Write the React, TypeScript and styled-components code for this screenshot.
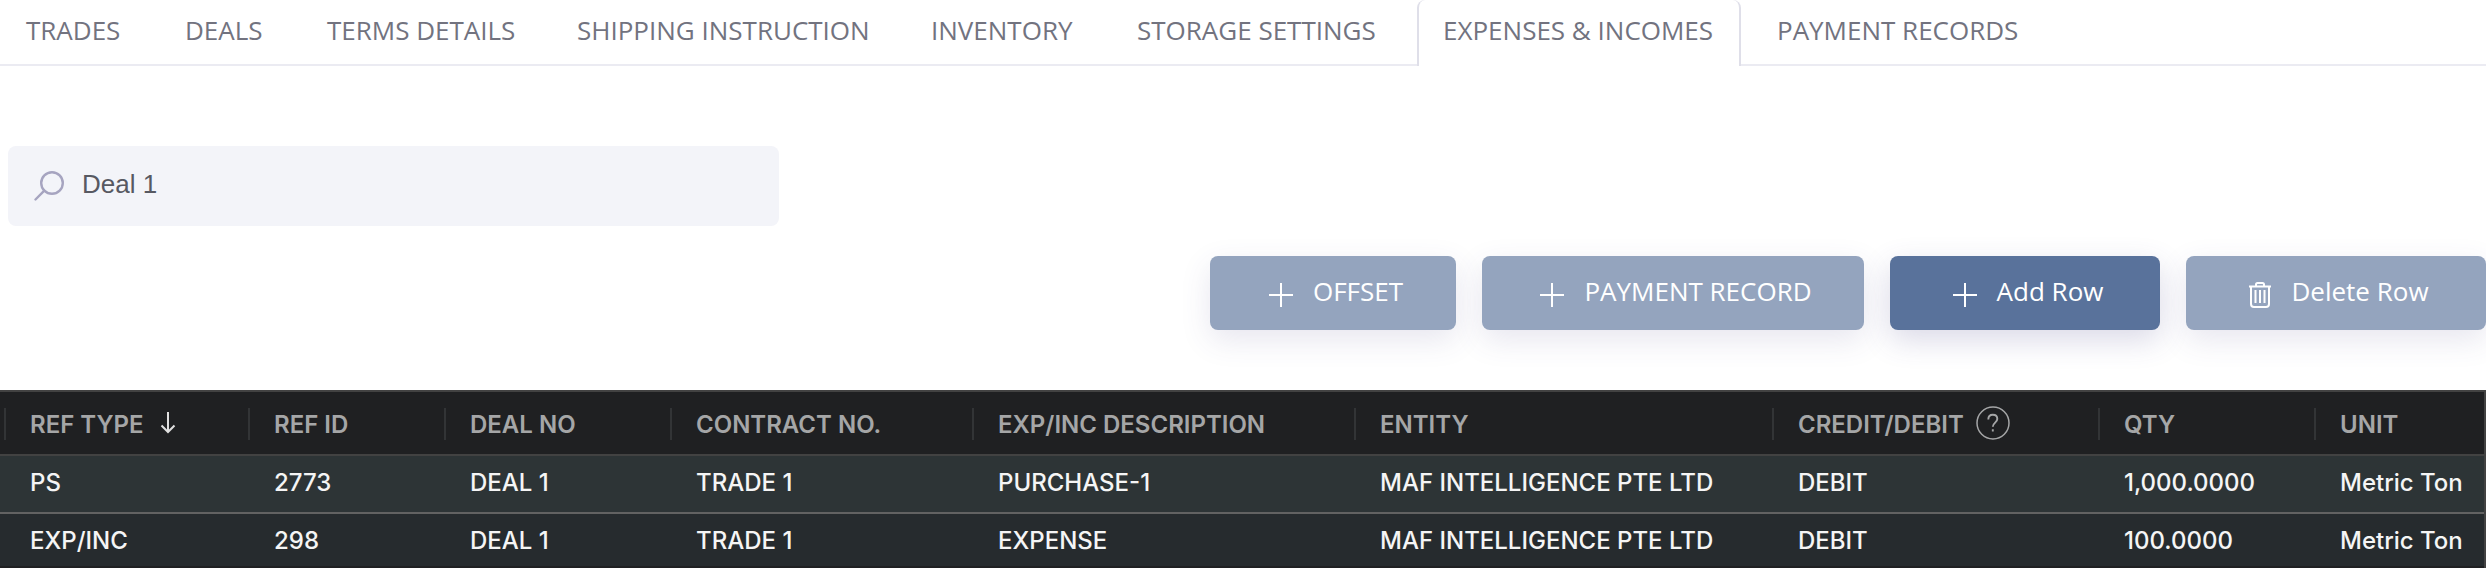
import React, { useState } from 'react';
import styled, { createGlobalStyle } from 'styled-components';

const GlobalStyle = createGlobalStyle`
  *, *::before, *::after { box-sizing: border-box; }
  body { margin: 0; background: #fff; overflow-x: hidden; }
`;

const Page = styled.main`
  font-family: 'Open Sans', sans-serif;
  font-size: 26px;
  line-height: 36px;
`;

const TabBar = styled.nav`
  display: flex;
  height: 66px;
  border-bottom: 2px solid #ebebf2;
`;

const Tab = styled.a<{ $active?: boolean; $width: number }>`
  flex: 0 0 ${(p) => p.$width}px;
  height: 66px;
  margin-right: 10px;
  padding: 12px 0 0 24px;
  border: 2px solid ${(p) => (p.$active ? '#dfdfe9' : 'transparent')};
  border-width: 0 2px;
  border-radius: 8px 8px 0 0;
  background: ${(p) => (p.$active ? '#fff' : 'transparent')};
  color: #72737f;
  text-decoration: none;
  white-space: nowrap;
`;

const SearchBox = styled.label`
  display: flex;
  align-items: center;
  gap: 18px;
  width: 31%;
  height: 80px;
  margin: 80px 0 0 8px;
  padding: 0 26px;
  border-radius: 8px;
  background: #f3f4f9;
`;

const SearchInput = styled.input`
  flex: 1;
  min-width: 0;
  padding: 0 0 4px;
  border: 0;
  outline: 0;
  background: transparent;
  color: #575962;
  font: 26px/36px 'Liberation Sans', sans-serif;
`;

const Actions = styled.div`
  display: flex;
  justify-content: flex-end;
  gap: 26px;
  margin-top: 30px;
`;

const Button = styled.button<{ $primary?: boolean; $width: number }>`
  display: flex;
  align-items: center;
  justify-content: center;
  gap: 20px;
  width: ${(p) => p.$width}px;
  height: 74px;
  padding: 0 0 4px 6px;
  border: 0;
  border-radius: 8px;
  background: ${(p) => (p.$primary ? '#59729b' : '#94a4be')};
  box-shadow: 0 10px 30px ${(p) => (p.$primary ? 'rgba(69, 65, 135, 0.2)' : 'rgba(69, 65, 135, 0.13)')};
  color: #fff;
  font: inherit;
  white-space: nowrap;

  svg { margin-top: 8px; }
`;

const Table = styled.table`
  width: 100%;
  margin-top: 60px;
  border: solid #424242;
  border-width: 2px 2px 0 0;
  border-spacing: 0;
  table-layout: fixed;
  background: #262b2e;
  color: #f5f5f5;
  font: 500 24px/32px Inter, sans-serif;
`;

const Col = styled.col<{ $width?: number }>`
  width: ${(p) => (p.$width ? `${p.$width}px` : 'auto')};
`;

const HeadCell = styled.th<{ $edge?: boolean }>`
  height: 64px;
  padding: ${(p) => (p.$edge ? '0' : '4px 0 0 24px')};
  border-bottom: 2px solid #424242;
  background: linear-gradient(#323436, #323436) no-repeat right 16px / 2px 32px #1f2022;
  color: #a5a6a7;
  font-weight: 600;
  text-align: left;
  white-space: nowrap;

  &:last-child { background-size: 0 0; }
`;

const HeadContent = styled.span`
  display: flex;
  align-items: center;
  gap: 12px;
  height: 32px;

  svg { margin-bottom: 4px; }
`;

const Row = styled.tr`
  background: #262b2e;

  &:nth-child(odd) { background: #2d3436; }
`;

const Cell = styled.td`
  height: 58px;
  padding: 0 0 2px 24px;
  border-bottom: 2px solid #626262;
  white-space: nowrap;

  ${Row}:last-child & {
    height: 54px;
    padding-top: 2px;
    padding-bottom: 0;
    border-bottom-color: #1f2022;
  }
`;

const EdgeCell = styled(Cell)`
  padding: 0;
`;

const PlusIcon = () => (
  <svg width="24" height="24" viewBox="0 0 24 24" stroke="#fff" strokeWidth="2" aria-hidden="true">
    <path d="M12 0v24M0 12h24" />
  </svg>
);

const TrashIcon = () => (
  <svg width="22" height="26" viewBox="0 0 22 26" fill="none" stroke="#fff" strokeWidth="2" aria-hidden="true">
    <path d="M0 4.500h22M7 4V2.500Q7 1 8.500 1h5Q15 1 15 2.500V4M2 5v17q0 3 3 3h12q3 0 3-3V5M6.500 8v13M11 8v13M15.500 8v13" />
  </svg>
);

const SearchIcon = () => (
  <svg width="30" height="30" viewBox="0 0 30 30" fill="none" stroke="#a6a4c0" strokeWidth="2.400" strokeLinecap="round" aria-hidden="true">
    <circle cx="18" cy="12" r="10.800" />
    <path d="M10.300 19.700L1.500 28.500" />
  </svg>
);

const ArrowDownIcon = () => (
  <svg width="24" height="24" viewBox="0 0 24 24" fill="none" stroke="#e0e0e0" strokeWidth="2" aria-hidden="true">
    <path d="M12 1v20M5.500 14.500L12 21l6.500-6.500" />
  </svg>
);

const HelpIcon = () => (
  <svg width="34" height="34" viewBox="0 0 34 34" fill="none" stroke="#a5a6a7" strokeWidth="1.500" aria-hidden="true">
    <circle cx="17" cy="17" r="16" />
    <path d="M12.300 13.500c0-3 1.700-4.700 4.500-4.700s4.500 1.700 4.500 4.200c0 3.500-4.500 3.800-4.500 7.800M16.800 23.200v2.400" strokeWidth="1.900" />
  </svg>
);

const tabs = [
  { label: 'TRADES', width: 149 },
  { label: 'DEALS', width: 132 },
  { label: 'TERMS DETAILS', width: 240 },
  { label: 'SHIPPING INSTRUCTION', width: 344 },
  { label: 'INVENTORY', width: 196 },
  { label: 'STORAGE SETTINGS', width: 296 },
  { label: 'EXPENSES & INCOMES', width: 324 },
  { label: 'PAYMENT RECORDS', width: 296 },
];

const columns = [
  { label: 'REF TYPE', width: 244, icon: <ArrowDownIcon /> },
  { label: 'REF ID', width: 196 },
  { label: 'DEAL NO', width: 226 },
  { label: 'CONTRACT NO.', width: 302 },
  { label: 'EXP/INC DESCRIPTION', width: 382 },
  { label: 'ENTITY', width: 418 },
  { label: 'CREDIT/DEBIT', width: 326, icon: <HelpIcon /> },
  { label: 'QTY', width: 216 },
  { label: 'UNIT' },
];

const rows = [
  ['PS', '2773', 'DEAL 1', 'TRADE 1', 'PURCHASE-1', 'MAF INTELLIGENCE PTE LTD', 'DEBIT', '1,000.0000', 'Metric Ton'],
  ['EXP/INC', '298', 'DEAL 1', 'TRADE 1', 'EXPENSE', 'MAF INTELLIGENCE PTE LTD', 'DEBIT', '100.0000', 'Metric Ton'],
];

export default function App() {
  const [active, setActive] = useState('EXPENSES & INCOMES');
  const [query, setQuery] = useState('Deal 1');

  return (
    <Page>
      <GlobalStyle />
      <TabBar>
        {tabs.map((tab) => (
          <Tab
            key={tab.label}
            href="#"
            $width={tab.width}
            $active={tab.label === active}
            onClick={() => setActive(tab.label)}
          >
            {tab.label}
          </Tab>
        ))}
      </TabBar>
      <SearchBox>
        <SearchIcon />
        <SearchInput aria-label="Search" value={query} onChange={(e) => setQuery(e.target.value)} />
      </SearchBox>
      <Actions>
        <Button $width={246}><PlusIcon />OFFSET</Button>
        <Button $width={382}><PlusIcon />PAYMENT RECORD</Button>
        <Button $width={270} $primary><PlusIcon />Add Row</Button>
        <Button $width={300}><TrashIcon />Delete Row</Button>
      </Actions>
      <Table>
        <colgroup>
          <Col $width={6} />
          {columns.map((column) => <Col key={column.label} $width={column.width} />)}
        </colgroup>
        <thead>
          <tr>
            <HeadCell $edge />
            {columns.map((column) => (
              <HeadCell key={column.label} scope="col">
                <HeadContent>{column.label}{column.icon}</HeadContent>
              </HeadCell>
            ))}
          </tr>
        </thead>
        <tbody>
          {rows.map((row) => (
            <Row key={row[1]}>
              <EdgeCell />
              {row.map((value, i) => <Cell key={columns[i].label}>{value}</Cell>)}
            </Row>
          ))}
        </tbody>
      </Table>
    </Page>
  );
}
